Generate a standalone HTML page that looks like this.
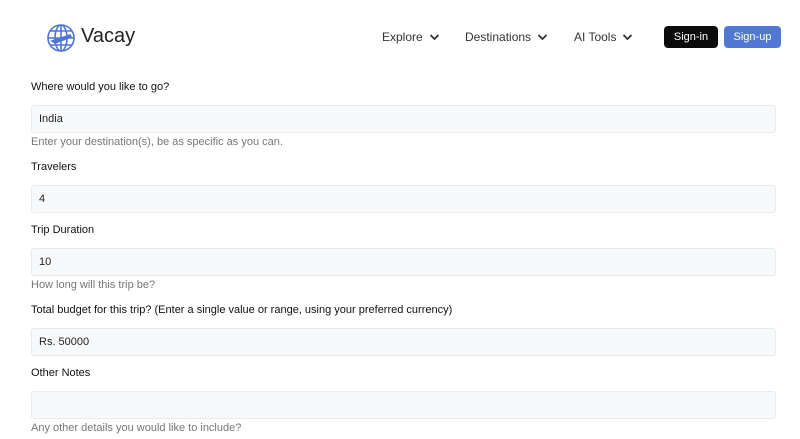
<!DOCTYPE html>
<html><head><meta charset="utf-8"><style>
*{margin:0;padding:0;box-sizing:border-box}
body{width:800px;height:439px;background:#fff;font-family:"Liberation Sans",sans-serif;position:relative;overflow:hidden;color:#111}
.a{position:absolute}
.lbl{position:absolute;left:31px;font-size:11px;color:#111}
.inp{position:absolute;left:31px;width:745px;height:28px;background:#f8f9fa;border:1px solid #e8eaec;border-radius:3px;font-size:11px;padding:7px 0 0 7px;color:#222}
.help{position:absolute;left:31px;font-size:11px;color:#777}
.nav{position:absolute;top:30px;font-size:12px;color:#333}
.chev{position:absolute;top:33px}
.btn{position:absolute;top:26px;height:22px;border-radius:4px;color:#fff;font-size:11px;text-align:center;line-height:22px}
</style></head><body>
<svg class="a" style="left:46px;top:23px" width="30" height="30" viewBox="0 0 30 30" fill="none" stroke="#4f74d6" stroke-width="1.6">
<circle cx="15" cy="15" r="13"/>
<ellipse cx="15" cy="15" rx="6" ry="13"/>
<line x1="15" y1="2" x2="15" y2="28"/>
<line x1="4" y1="8" x2="26" y2="8"/>
<line x1="2" y1="15" x2="28" y2="15"/>
<line x1="4" y1="22" x2="26" y2="22"/>
<path d="M6 18 L24 12 L25 14 L9 20 Z" fill="#4f74d6"/>
</svg>
<div class="a" style="left:81px;top:25px;font-size:20px;color:#222">Vacay</div>
<div class="nav" style="left:382px">Explore</div>
<svg class="chev" style="left:429px" width="11" height="8" viewBox="0 0 11 8"><path d="M1.5 2 L5.5 6 L9.5 2" stroke="#333" stroke-width="1.8" fill="none"/></svg>
<div class="nav" style="left:465px">Destinations</div>
<svg class="chev" style="left:537px" width="11" height="8" viewBox="0 0 11 8"><path d="M1.5 2 L5.5 6 L9.5 2" stroke="#333" stroke-width="1.8" fill="none"/></svg>
<div class="nav" style="left:574px">AI Tools</div>
<svg class="chev" style="left:622px" width="11" height="8" viewBox="0 0 11 8"><path d="M1.5 2 L5.5 6 L9.5 2" stroke="#333" stroke-width="1.8" fill="none"/></svg>
<div class="btn" style="left:664px;width:54px;background:#0b0b0b">Sign-in</div>
<div class="btn" style="left:724px;width:57px;background:#5178d3">Sign-up</div>

<div class="lbl" style="top:81px">Where would you like to go?</div>
<div class="inp" style="top:105px">India</div>
<div class="help" style="top:136px">Enter your destination(s), be as specific as you can.</div>
<div class="lbl" style="top:161px">Travelers</div>
<div class="inp" style="top:185px">4</div>
<div class="lbl" style="top:224px">Trip Duration</div>
<div class="inp" style="top:248px">10</div>
<div class="help" style="top:279px">How long will this trip be?</div>
<div class="lbl" style="top:304px">Total budget for this trip? (Enter a single value or range, using your preferred currency)</div>
<div class="inp" style="top:328px">Rs. 50000</div>
<div class="lbl" style="top:367px">Other Notes</div>
<div class="inp" style="top:391px"></div>
<div class="help" style="top:422px">Any other details you would like to include?</div>
</body></html>
